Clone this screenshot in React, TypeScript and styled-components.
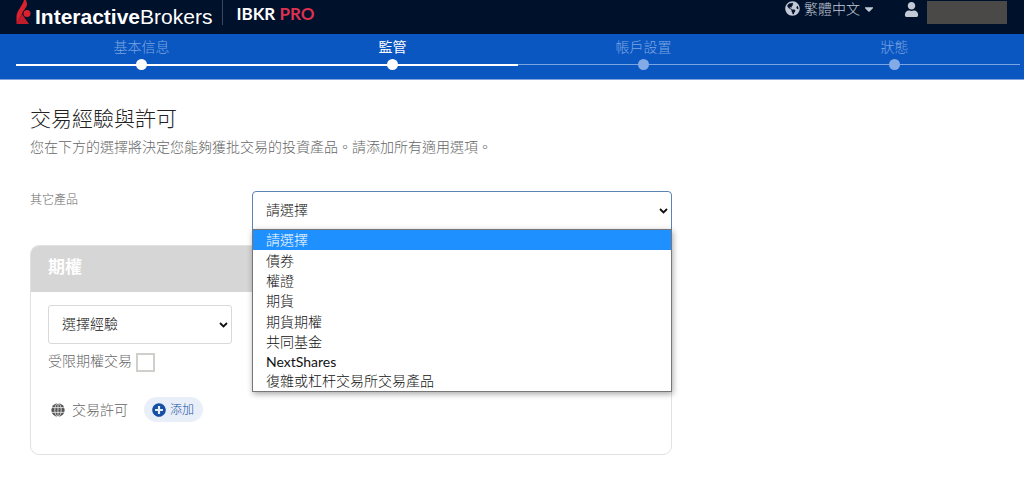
import React from "react";
import styled, { createGlobalStyle } from "styled-components";
import { FaCaretDown, FaGlobeAmericas, FaPlusCircle, FaUser } from "react-icons/fa";

const GlobalStyle = createGlobalStyle`
  * { box-sizing: border-box; }
  body {
    margin: 0;
    background: #fff;
    color: #666;
    font: 300 14px/20px Lato, "Noto Sans CJK TC", sans-serif;
  }
  button, select, input { font: inherit; margin: 0; }
`;

const TopBar = styled.header`
  display: flex;
  justify-content: space-between;
  height: 34px;
  padding: 0 17px 0 16px;
  overflow: hidden;
  background: #00112b;
`;

const Brand = styled.a`
  display: flex;
  align-items: flex-start;
  color: #fff;
  text-decoration: none;
`;

const Flame = styled.svg`
  width: 16px;
  height: 25px;
  margin-right: 3px;
`;

const LogoText = styled.span`
  padding-top: 6px;
  font: 400 21px/21px "Liberation Sans", sans-serif;
  b { font-weight: 700; }
`;

const ProductName = styled.span`
  height: 25px;
  margin-left: 10px;
  padding: 3px 0 0 13px;
  border-left: 1px solid #3a475c;
  font: 700 17px/22px Lato, sans-serif;
  em { color: #dc3250; font-style: normal; }
`;

const UserTools = styled.div`
  display: flex;
  align-items: flex-start;
  color: #c3cad6;
`;

const LanguageButton = styled.button`
  display: flex;
  align-items: center;
  height: 17px;
  padding: 0;
  border: 0;
  background: none;
  color: inherit;
  span { margin: 0 2px 0 4px; }
`;

const AccountButton = styled.button`
  display: flex;
  padding: 2px 0 0;
  margin-left: 28px;
  border: 0;
  background: none;
  color: inherit;
`;

const AccountName = styled.div`
  width: 80px;
  height: 23px;
  margin: 1px 0 0 8px;
  background: #4b4848;
`;

const Progress = styled.nav`
  height: 46px;
  padding: 0 4px 0 16px;
  border-bottom: 1px solid #7fa3dc;
  background: #0b57c1;
`;

const StepList = styled.ol`
  display: grid;
  grid-template-columns: repeat(4, 1fr);
  margin: 0;
  padding: 0;
  list-style: none;
`;

const Step = styled.li<{ $reached?: boolean; $current?: boolean }>`
  display: flex;
  flex-direction: column;
  align-items: center;
  padding-top: 3px;
  color: ${(p) => (p.$current ? "#fff" : "#7ba4e2")};
  font-weight: ${(p) => (p.$current ? 400 : 300)};
  &::after {
    content: "";
    width: 11px;
    height: 11px;
    margin-top: 2px;
    border-radius: 50%;
    background: ${(p) => (p.$reached ? "#fff" : "#85abe6")};
  }
  background: linear-gradient(${(p) => (p.$reached ? "#fff, #fff" : "#7ba4e2, #7ba4e2")}) 0 30px / 100%
    ${(p) => (p.$reached ? "2px" : "1px")} no-repeat;
`;

const Page = styled.main`
  padding: 25px 30px;
`;

const Title = styled.h1`
  margin: 0;
  color: #222;
  font-size: 21px;
  font-weight: 300;
  line-height: 26px;
`;

const Intro = styled.p`
  margin: 6px 0 34px;
`;

const Form = styled.form`
  width: 66.6%;
`;

const Field = styled.div`
  display: grid;
  grid-template-columns: 222px 1fr;
`;

const FieldLabel = styled.label`
  font-size: 12px;
  line-height: 18px;
`;

const SelectWrap = styled.div`
  position: relative;
`;

const Select = styled.select<{ $open?: boolean }>`
  display: block;
  width: 100%;
  height: 39px;
  padding: 0 28px 2px 13px;
  border: 1px solid ${(p) => (p.$open ? "#5b84b4" : "#d9d9d9")};
  border-radius: ${(p) => (p.$open ? "4px 4px 0 0" : "3px")};
  outline: 0;
  appearance: none;
  background: #fff;
  color: #111;
`;

const Chevron = styled.svg`
  position: absolute;
  top: 17px;
  right: 4px;
  width: 9px;
  height: 6px;
  pointer-events: none;
`;

const Options = styled.ul`
  position: absolute;
  z-index: 1;
  top: 38px;
  left: 0;
  right: 0;
  display: grid;
  grid-template-rows: repeat(6, 1fr) 18px 1fr;
  height: 163px;
  margin: 0;
  padding: 0;
  border: 1px solid #777;
  background: #fff;
  box-shadow: 1px 2px 6px rgba(0, 0, 0, 0.35);
  list-style: none;
`;

const Option = styled.li<{ $active?: boolean }>`
  display: flex;
  align-items: center;
  padding-left: 13px;
  overflow: hidden;
  background: ${(p) => (p.$active ? "#1e90ff" : "#fff")};
  color: ${(p) => (p.$active ? "#fff" : "#111")};
  &:lang(en) { font-weight: 400; }
`;

const Card = styled.section`
  margin-top: 15px;
  border: 1px solid #e2e2e2;
  border-radius: 9px;
  overflow: hidden;
`;

const CardTitle = styled.h2`
  height: 46px;
  margin: 0;
  padding-left: 17px;
  background: #d6d6d6;
  color: #fff;
  font-size: 17px;
  font-weight: 700;
  line-height: 42px;
`;

const CardBody = styled.div`
  padding: 13px 17px 32px;
`;

const ExperienceSelect = styled(SelectWrap)`
  width: 184px;
`;

const CheckRow = styled.label`
  display: flex;
  align-items: center;
  gap: 4px;
  height: 20px;
  margin-top: 7px;
`;

const Checkbox = styled.input`
  width: 19px;
  height: 19px;
  margin-top: 3px;
  border: 2px solid #cfcfcb;
  appearance: none;
  background: #fff;
`;

const PermissionRow = styled.div`
  display: flex;
  align-items: center;
  margin-top: 26px;
  padding-left: 3px;
`;

const Globe = styled.svg`
  width: 14px;
  height: 14px;
  margin-right: 7px;
`;

const AddButton = styled.button`
  display: flex;
  align-items: center;
  gap: 4px;
  height: 25px;
  margin-left: 16px;
  padding: 0 9px 0 8px;
  border: 0;
  border-radius: 13px;
  background: #e9eff9;
  color: #1650a5;
  font-size: 12px;
`;

const steps = ["基本信息", "監管", "帳戶設置", "狀態"];
const products = ["請選擇", "債券", "權證", "期貨", "期貨期權", "共同基金", "NextShares", "復雜或杠杆交易所交易產品"];

const SelectArrow = () => (
  <Chevron viewBox="0 0 9 6" aria-hidden="true">
    <path d="M1 1l3.5 3.5L8 1" fill="none" stroke="#111" strokeWidth="1.800" />
  </Chevron>
);

export default function App() {
  return (
    <>
      <GlobalStyle />
      <TopBar>
        <Brand href="#">
          <Flame viewBox="0 0 16 25" aria-hidden="true">
            <path d="M8.500-2C7 6 1 10 .5 16V24L6 14c1-4 5-6 5-10 0-2-1-4-2.500-6z" fill="#d8232f" />
            <path d="M6 14L.5 24h12.500z" fill="#c01c2a" />
            <circle cx="11" cy="13.500" r="3.500" fill="#d8232f" />
          </Flame>
          <LogoText><b>Interactive</b>Brokers</LogoText>
          <ProductName>IBKR <em>PRO</em></ProductName>
        </Brand>
        <UserTools>
          <LanguageButton type="button">
            <FaGlobeAmericas size={15} />
            <span>繁體中文</span>
            <FaCaretDown size={14} />
          </LanguageButton>
          <AccountButton type="button" aria-label="帳戶">
            <FaUser size={15} />
          </AccountButton>
          <AccountName />
        </UserTools>
      </TopBar>
      <Progress>
        <StepList>
          {steps.map((name, i) => (
            <Step key={name} $reached={i < 2} $current={i === 1} aria-current={i === 1 ? "step" : undefined}>
              {name}
            </Step>
          ))}
        </StepList>
      </Progress>
      <Page>
        <Title>交易經驗與許可</Title>
        <Intro>您在下方的選擇將決定您能夠獲批交易的投資產品。請添加所有適用選項。</Intro>
        <Form>
          <Field>
            <FieldLabel htmlFor="product">其它產品</FieldLabel>
            <SelectWrap>
              <Select id="product" $open>
                {products.map((name) => <option key={name}>{name}</option>)}
              </Select>
              <SelectArrow />
              <Options role="listbox" aria-label="其它產品">
                {products.map((name, i) => (
                  <Option
                    key={name}
                    role="option"
                    lang={/^[A-Za-z]+$/.test(name) ? "en" : "zh-Hant"}
                    aria-selected={i === 0}
                    $active={i === 0}
                  >
                    {name}
                  </Option>
                ))}
              </Options>
            </SelectWrap>
          </Field>
          <Card>
            <CardTitle>期權</CardTitle>
            <CardBody>
              <ExperienceSelect>
                <Select aria-label="選擇經驗">
                  <option>選擇經驗</option>
                </Select>
                <SelectArrow />
              </ExperienceSelect>
              <CheckRow>
                受限期權交易
                <Checkbox type="checkbox" />
              </CheckRow>
              <PermissionRow>
                <Globe viewBox="0 0 14 14" aria-hidden="true">
                  <circle cx="7" cy="7" r="6.700" fill="#555" />
                  <path d="M0 4.600h14M0 9.400h14M7 0v14" stroke="#fff" strokeWidth=".7" />
                  <ellipse cx="7" cy="7" rx="3.200" ry="6.700" fill="none" stroke="#fff" strokeWidth=".7" />
                </Globe>
                交易許可
                <AddButton type="button">
                  <FaPlusCircle size={14} />
                  添加
                </AddButton>
              </PermissionRow>
            </CardBody>
          </Card>
        </Form>
      </Page>
    </>
  );
}
